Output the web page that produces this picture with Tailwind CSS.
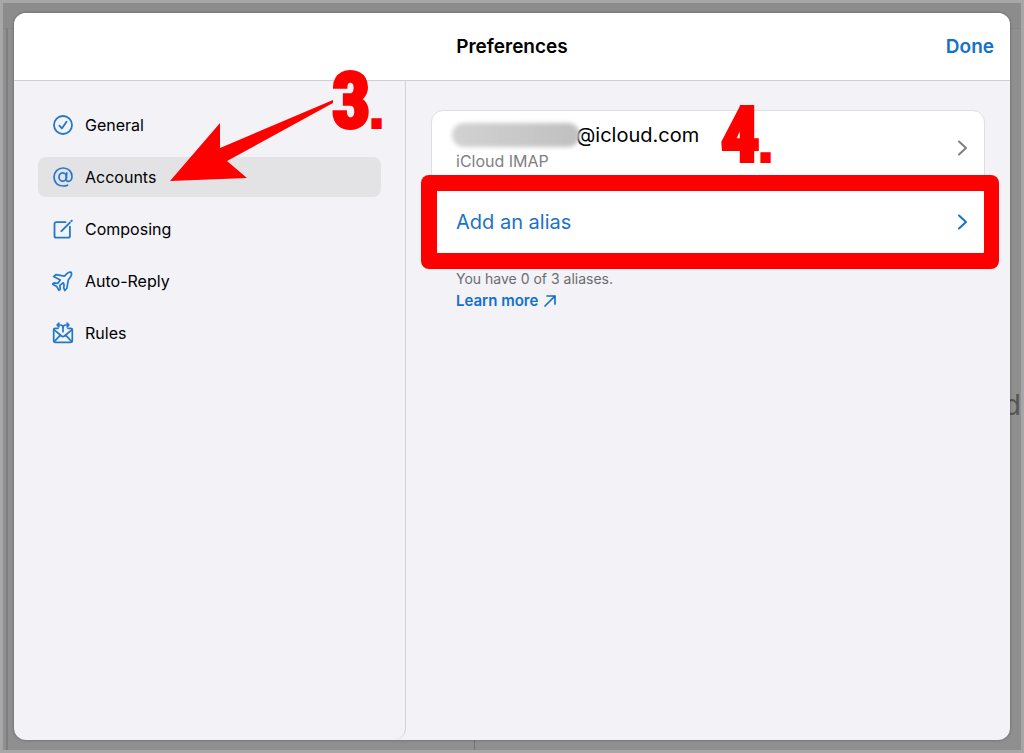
<!DOCTYPE html>
<html lang="en">
<head>
<meta charset="utf-8">
<meta name="viewport" content="width=device-width, initial-scale=1">
<title>Preferences</title>
<script src="https://cdn.jsdelivr.net/npm/@tailwindcss/browser@4"></script>
</head>
<body class="relative flex min-h-screen overflow-hidden border-3 border-[#a7a7a7] bg-[#8f8f8f] font-['Inter','Liberation_Sans',sans-serif] text-black antialiased">
  <!-- dimmed mail window behind the dialog -->
  <div class="absolute inset-0" aria-hidden="true">
    <div class="h-[26px] border-b border-[#858585] bg-[#8c8c8c]"></div>
    <div class="absolute top-[26px] bottom-0 left-[3px] w-0.5 bg-[#7e7e80]"></div>
    <div class="absolute bottom-0 left-[471px] h-3 w-px bg-[#747474]"></div>
    <span class="absolute top-1/2 right-0 pt-3 text-[28px] leading-8 text-[#555555]">d</span>
  </div>

  <div role="dialog" aria-labelledby="title" class="relative mx-[11px] my-2.5 flex flex-1 flex-col rounded-xl bg-[#f2f2f7] shadow-[0_0_3px_rgba(0,0,0,0.35)]">
    <header class="grid h-17 grid-cols-[1fr_auto_1fr] items-center rounded-t-xl border-b border-[#cfcfd4] bg-white px-4">
      <h1 id="title" class="col-start-2 text-[19px] leading-6 font-semibold">Preferences</h1>
      <button class="justify-self-end text-[19px] leading-6 font-semibold text-[#1470cc]">Done</button>
    </header>

    <div class="flex flex-1">
      <nav class="relative flex w-[392px] shrink-0 flex-col gap-3 rounded-br-xl border-r border-[#d3d3d8] px-6 pt-6 text-[16px] leading-6">
        <a href="#general" class="flex h-10 items-center gap-3 rounded-lg px-[15px]">
          <svg class="size-5 text-[#2478cc]" viewBox="0 0 20 20" fill="none" stroke="currentColor" stroke-width="1.8" stroke-linecap="round" stroke-linejoin="round"><circle cx="10" cy="10" r="9"/><path d="M6.4 10.6l2.500 2.800 4.600-6.600"/></svg>
          General
        </a>
        <a href="#accounts" aria-current="page" class="flex h-10 items-center gap-3 rounded-lg bg-[#e3e3e5] px-[15px]">
          <svg class="size-5 text-[#2478cc]" viewBox="0 0 20 20" fill="none" stroke="currentColor" stroke-width="1.700" stroke-linecap="round" stroke-linejoin="round"><ellipse cx="9.700" cy="10" rx="3.700" ry="4.200"/><path d="M13.800 5.800l-.5 6.200c-.1 1.500.6 2.300 1.800 2.300 2.300 0 3.900-2.100 3.900-4.900C19 4.600 15.400 1 10.200 1 4.900 1 1 4.800 1 10.100c0 5.300 3.700 8.900 9.200 8.900 1.700 0 3.200-.3 4.300-.8"/></svg>
          Accounts
        </a>
        <a href="#composing" class="flex h-10 items-center gap-3 rounded-lg px-[15px]">
          <svg class="size-5 text-[#2478cc]" viewBox="0 0 20 20" fill="none" stroke="currentColor" stroke-width="1.800" stroke-linecap="round" stroke-linejoin="round"><path d="M12.500 3.200H3.200c-1.100 0-1.700.6-1.700 1.700v12c0 1.100.6 1.700 1.700 1.700h12c1.100 0 1.700-.6 1.700-1.700V7.600"/><path d="M8.400 12.100L16.900 3.600M18.500 2l.2-.2" stroke-width="2"/></svg>
          Composing
        </a>
        <a href="#auto-reply" class="flex h-10 items-center gap-3 rounded-lg px-[15px]">
          <svg class="size-5 overflow-visible text-[#2478cc]" viewBox="0 0 20 20" fill="none" stroke="currentColor" stroke-width="1.700" stroke-linecap="round" stroke-linejoin="round"><path d="M18.200 1.400c-1.500-.6-3.200.2-4.500 1.500l-2.300 2.300-8.500-1.500L.6 5.600l6.700 3.300-2.700 3.500-3.600-.5-1.300 1.300 4 2.200 2.200 4 1.400-1.300-.5-3.700 3.500-2.600.8 2.200-.4 2.900 1.100 2.600 2-2.200L15.400 8.700l1.700-2.200c1.300-1.500 1.800-3.500 1.100-5.100z"/></svg>
          Auto-Reply
        </a>
        <a href="#rules" class="flex h-10 items-center gap-3 rounded-lg px-[15px]">
          <svg class="size-5 overflow-visible text-[#2478cc]" viewBox="0 0 20 20" fill="none" stroke="currentColor" stroke-width="1.700" stroke-linecap="round" stroke-linejoin="round"><path d="M5 5.300H2.300C1.300 5.300.7 5.900.7 6.900v10.900c0 1 .6 1.600 1.600 1.600h15.400c1 0 1.600-.6 1.600-1.600V6.900c0-1-.6-1.600-1.600-1.600H15"/><path d="M1.200 6.800L8.600 13c.9.700 1.900.7 2.800 0l7.400-6.200M1.200 18.700l6.200-6.500M18.800 18.700l-6.200-6.500M10 8.700V5M10 5c0-1.900-.9-3-2.600-3H4.600M10 5c0-1.900.9-3 2.600-3h2.800M5.900.2L4.100 2l1.800 1.800M14.100.2L15.900 2l-1.800 1.800"/></svg>
          Rules
        </a>

        <!-- step 3 marker -->
        <svg class="pointer-events-none absolute top-4 left-[156px] h-[86px] w-[166px] fill-[#ff0000]" viewBox="0 0 166 86" aria-hidden="true"><path d="M0 84L50 26V51L163 3V6L57 64L77 81z"/></svg>
        <span class="pointer-events-none absolute -top-5 left-[318px] flex items-baseline font-['Impact','Roboto_Condensed','Open_Sans_Condensed','Noto_Sans_Condensed',sans-serif] text-[76px] leading-[80px] font-bold text-[#ff0000] [-webkit-text-stroke:4px_#ff0000]">3<span class="font-['Impact','Liberation_Sans',sans-serif] text-[44px] leading-[44px]">.</span></span>
      </nav>

      <main class="flex-1 pt-[29px] pr-[25px] pl-[25px]">
        <section class="relative rounded-xl border border-[#dedee3] bg-white">
          <a href="#account" class="flex h-[73px] items-center justify-between pr-4 pl-6">
            <span class="flex flex-col pb-0.5">
              <span class="flex items-center text-[20px] leading-7">
                <span class="-ml-1 h-6 w-32 rounded-full bg-linear-to-r from-[#d2d2d2] to-[#c0c0c0] blur-[2px]" aria-label="Hidden address"></span>
                <span class="-ml-1">@icloud.com</span>
              </span>
              <span class="text-[16px] leading-6 text-[#808083]">iCloud IMAP</span>
            </span>
            <svg class="h-4 w-3 text-[#808083]" viewBox="0 0 12 16" fill="none" stroke="currentColor" stroke-width="2" stroke-linecap="round" stroke-linejoin="round"><path d="M3 1.500l7 6.500-7 6.500"/></svg>
          </a>
          <a href="#alias" class="relative flex h-[76px] items-center justify-between pr-4 pl-6 text-[20px] leading-7 text-[#1c72c8]">
            Add an alias
            <svg class="h-4 w-3" viewBox="0 0 12 16" fill="none" stroke="currentColor" stroke-width="2" stroke-linecap="round" stroke-linejoin="round"><path d="M3 1.500l7 6.500-7 6.500"/></svg>
            <span class="pointer-events-none absolute -top-[9px] -right-[15px] -bottom-[9px] -left-[11px] rounded-lg bg-[#ff0000] [clip-path:polygon(evenodd,0_0,100%_0,100%_100%,0_100%,0_0,16px_16px,calc(100%-15px)_16px,calc(100%-15px)_calc(100%-16px),16px_calc(100%-16px),16px_16px)]" aria-hidden="true"></span>
          </a>
          <!-- step 4 marker -->
          <span class="pointer-events-none absolute -top-4 left-[289px] flex items-baseline font-['Impact','Roboto_Condensed','Open_Sans_Condensed','Noto_Sans_Condensed',sans-serif] text-[76px] leading-[80px] font-bold text-[#ff0000] [-webkit-text-stroke:4px_#ff0000]">4<span class="font-['Impact','Liberation_Sans',sans-serif] text-[44px] leading-[44px]">.</span></span>
        </section>
        <div class="pt-1.5 pl-[25px]">
          <p class="text-[14px] leading-6 text-[#6c6c70]">You have 0 of 3 aliases.</p>
          <a href="#learn" class="flex w-fit items-center gap-1.5 text-[15px] leading-5 font-semibold text-[#1470cc]">Learn more
            <svg class="size-3" viewBox="0 0 12 12" fill="none" stroke="currentColor" stroke-width="1.700" stroke-linecap="round" stroke-linejoin="round"><path d="M1 11L11 1M3 1h8v8"/></svg>
          </a>
        </div>
      </main>
    </div>
  </div>
</body>
</html>
